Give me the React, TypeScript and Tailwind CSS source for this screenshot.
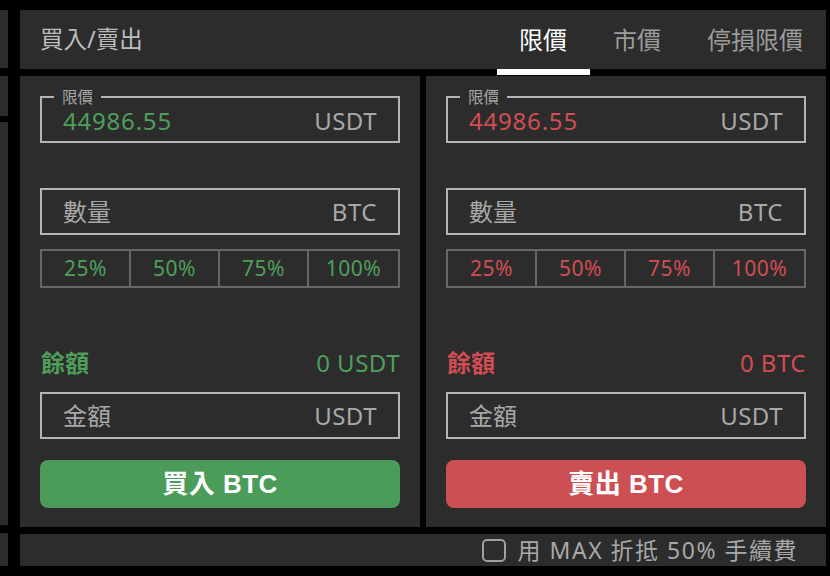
import React from "react";

const FONT = { fontFamily: '"Noto Sans", "Noto Sans CJK TC", sans-serif' };
const BTN_FONT = { fontFamily: '"Liberation Sans", "Noto Sans CJK TC", sans-serif' };

function Panel({ side }: { side: "buy" | "sell" }) {
  const isBuy = side === "buy";
  const accent = isBuy ? "text-[#4f9f5b]" : "text-[#d24d53]";
  return (
    <div className="w-[400px] h-[451px] bg-[#2c2c2c] px-[20px] flex flex-col">
      <div className="relative mt-[20px] h-[47px] border-2 border-[#b4b4b4] flex items-end justify-between pl-[21px] pr-[21px] pb-[8px]">
        <span className="absolute left-[12px] top-[-8px] px-[8px] bg-[#2c2c2c] text-[15.5px] leading-[15px] text-[#a8a8a8]">
          限價
        </span>
        <span className={`text-[24px] leading-[24px] tracking-[0.8px] ${accent}`}>44986.55</span>
        <span className="text-[24px] leading-[24px] tracking-[0.5px] text-[#a8a8a8]">USDT</span>
      </div>
      <div className="mt-[45px] h-[47px] border-2 border-[#b4b4b4] flex items-center justify-between pl-[21px] pr-[21px]">
        <span className="text-[24px] text-[#a8a8a8]">數量</span>
        <span className="text-[24px] tracking-[0.5px] text-[#a8a8a8]">BTC</span>
      </div>
      <div className="mt-[14px] h-[39px] border-2 border-[#676767] grid grid-cols-4 divide-x-2 divide-[#676767]">
        {["25%", "50%", "75%", "100%"].map((p) => (
          <div key={p} className={`flex items-center justify-center text-[21px] tracking-[0.5px] ${accent}`}>
            {p}
          </div>
        ))}
      </div>
      <div className="mt-[60px] h-[30px] flex items-center justify-between pl-[1px]">
        <span className={`text-[24px] font-bold ${accent}`}>餘額</span>
        <span className={`text-[24px] tracking-[0.5px] ${accent}`}>{isBuy ? "0 USDT" : "0 BTC"}</span>
      </div>
      <div className="mt-[14px] h-[47px] border-2 border-[#b4b4b4] flex items-center justify-between pl-[21px] pr-[21px]">
        <span className="text-[24px] text-[#a8a8a8]">金額</span>
        <span className="text-[24px] tracking-[0.5px] text-[#a8a8a8]">USDT</span>
      </div>
      <button
        style={BTN_FONT}
        className={`mt-[21px] h-[48px] rounded-[8px] flex items-center justify-center text-[26px] tracking-[0.5px] font-bold text-white ${
          isBuy ? "bg-[#4c9c59]" : "bg-[#cc5053]"
        }`}
      >
        {isBuy ? "買入 BTC" : "賣出 BTC"}
      </button>
    </div>
  );
}

export default function App() {
  return (
    <div className="w-[830px] h-[576px] bg-black flex overflow-hidden" style={FONT}>
      <div className="w-[8px] flex flex-col">
        <div className="mt-[10px] h-[58px] bg-[#2c2c2c]" />
        <div className="mt-[8px] h-[40px] bg-[#2c2c2c]" />
        <div className="mt-[6px] h-[403px] bg-[#2c2c2c]" />
        <div className="mt-[8px] h-[33px] bg-[#2c2c2c]" />
      </div>
      <div className="ml-[12px] w-[806px] flex flex-col">
        <div className="mt-[10px] h-[59px] bg-[#2c2c2c] flex items-center justify-between">
          <span className="ml-[20px] text-[23.5px] text-[#bdbdbd]">買入/賣出</span>
          <div className="flex h-full">
            <div className="relative pl-[22px] pr-[23px] flex items-center text-[24px] text-white">
              限價
              <span className="absolute left-0 right-0 bottom-[-6px] h-[6px] bg-white" />
            </div>
            <div className="px-[23px] flex items-center text-[24px] text-[#9c9c9c]">市價</div>
            <div className="px-[23px] flex items-center text-[24px] text-[#9c9c9c]">停損限價</div>
          </div>
        </div>
        <div className="mt-[7px] flex gap-[6px]">
          <Panel side="buy" />
          <Panel side="sell" />
        </div>
        <div className="mt-[7px] h-[32px] bg-[#2c2c2c] flex items-center justify-end pr-[28px] gap-[12px]">
          <span className="w-[24px] h-[23px] rounded-[5px] border-2 border-[#a0a0a0]" />
          <span className="text-[23px] text-[#a8a8a8] tracking-[1.5px]">用 MAX 折抵 50% 手續費</span>
        </div>
      </div>
    </div>
  );
}
